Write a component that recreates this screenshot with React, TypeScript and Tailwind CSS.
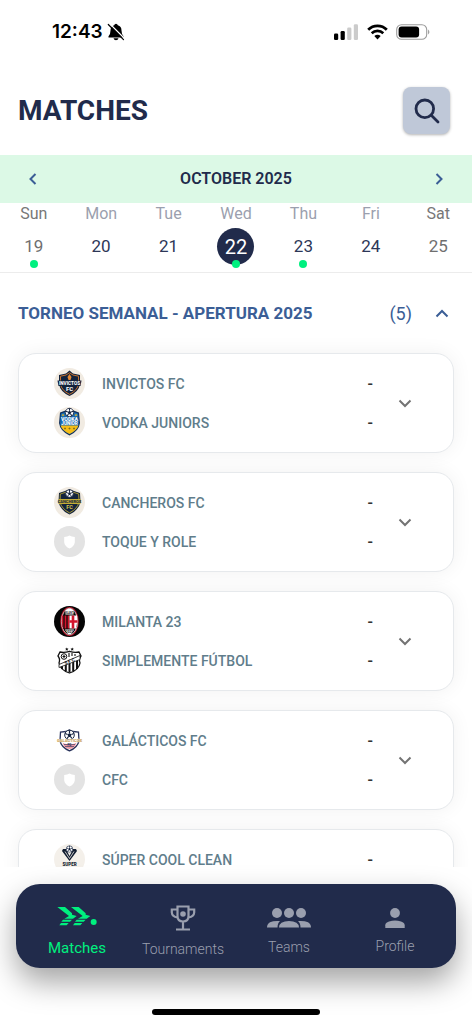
import { useState } from 'react';
import type { ReactNode } from 'react';

type BadgeName = 'invictos' | 'vodka' | 'cancheros' | 'milanta' | 'simplemente' | 'galacticos' | 'super' | 'none';

interface Team {
  name: string;
  badge: BadgeName;
}

interface Day {
  name: string;
  date: number;
  weekend?: boolean;
  hasMatches?: boolean;
}

const days: Day[] = [
  { name: 'Sun', date: 19, weekend: true, hasMatches: true },
  { name: 'Mon', date: 20 },
  { name: 'Tue', date: 21 },
  { name: 'Wed', date: 22, hasMatches: true },
  { name: 'Thu', date: 23, hasMatches: true },
  { name: 'Fri', date: 24 },
  { name: 'Sat', date: 25, weekend: true }
];

const matches: Team[][] = [
  [
    { name: 'INVICTOS FC', badge: 'invictos' },
    { name: 'VODKA JUNIORS', badge: 'vodka' }
  ],
  [
    { name: 'CANCHEROS FC', badge: 'cancheros' },
    { name: 'TOQUE Y ROLE', badge: 'none' }
  ],
  [
    { name: 'MILANTA 23', badge: 'milanta' },
    { name: 'SIMPLEMENTE FÚTBOL', badge: 'simplemente' }
  ],
  [
    { name: 'GALÁCTICOS FC', badge: 'galacticos' },
    { name: 'CFC', badge: 'none' }
  ],
  [{ name: 'SÚPER COOL CLEAN', badge: 'super' }]
];

const Ball = ({ x, y, r }: { x: number; y: number; r: number }) => (
  <g transform={`translate(${x} ${y}) scale(${r})`}>
    <circle r="1" fill="#fff" stroke="#14233f" strokeWidth="0.2" />
    <path d="M0-.4.4-.1.25.4h-.5L-.4-.1Z" fill="#14233f" />
    <path d="M0-.4V-1M.4-.1.9-.3M.25.4.6.8M-.25.4-.6.8M-.4-.1-.9-.3" stroke="#14233f" strokeWidth="0.25" />
  </g>
);

const badges: Record<BadgeName, ReactNode> = {
  invictos: (
    <>
      <circle cx="15.5" cy="15.5" r="15.5" fill="#f1ebe2" />
      <path d="M15.5 2.5 19 5.500 26 7V16Q25 23.500 15.500 28 6 23.500 5 16V7L12 5.500Z" fill="#12223c" />
      <path d="M15.5 4.800 19 7 24.500 8.200V16Q23.500 22.500 15.500 26.300 7.500 22.500 6.500 16V8.200L12 7Z" fill="none" stroke="#c5722f" strokeWidth="1" />
      <path d="M15.5 6 17.500 9 16.500 12H14.500L13.500 9Z" fill="#e58a35" />
      <path d="M3.5 12.500H27.500L26.500 18H4.500Z" fill="#12223c" />
      <text x="15.5" y="17" fontSize="4.7" fontWeight="800" textAnchor="middle" fill="#fff">INVICTOS</text>
      <text x="15.5" y="22.5" fontSize="6" fontWeight="800" textAnchor="middle" fill="#fff">FC</text>
    </>
  ),
  vodka: (
    <>
      <circle cx="15.5" cy="15.5" r="15.5" fill="#f1ebe2" />
      <path d="M15.5 2 25 5.500 26 16Q25 24 15.500 28.500 6 24 5 16L6 5.500Z" fill="#12315c" />
      <path d="M15.5 3.500 24 6.500 25 16Q24 23 15.500 27 7 23 6 16L7 6.500Z" fill="#1469b4" />
      <path d="M6.5 18.500H24.500Q22.500 24 15.500 27 8.500 24 6.500 18.500Z" fill="#f5bd17" />
      <path d="m9 6.500.6 1.200L11 8l-1.400.4L9 9.600l-.6-1.200L7 8l1.400-.3Zm13 0 .6 1.200L24 8l-1.400.4-.6 1.200-.6-1.200L20 8l1.400-.3Z" fill="#f5bd17" />
      <Ball x={15.5} y={5.5} r={4.2} />
      <text x="15.5" y="14.3" fontSize="5.2" fontWeight="800" textAnchor="middle" fill="#fff">VODKA</text>
      <text x="15.5" y="18.4" fontSize="4.6" fontWeight="800" textAnchor="middle" fill="#fff">JUNIOR</text>
      <path d="M11 20.500v2M15.500 20.500v2M20 20.500v2M10 21.500h2M14.500 21.500h2M19 21.500h2" stroke="#7b6a21" strokeWidth="0.8" />
    </>
  ),
  cancheros: (
    <>
      <circle cx="15.5" cy="15.5" r="15.5" fill="#f1ebe2" />
      <path d="M15.5 2 20 4 26 6 26.500 15Q25 23 15.500 27.500 6 23 4.500 15L5 6 11 4Z" fill="#14243c" />
      <path d="M15.5 4 24.700 7 25 15Q23.500 21.800 15.500 25.800 7.500 21.800 6 15L6.300 7Z" fill="none" stroke="#b6a33a" strokeWidth="0.9" />
      <Ball x={15.5} y={6.5} r={3.8} />
      <path d="M4.5 12H26.500V17H4.500Z" fill="#c4ae36" />
      <text x="15.5" y="16.1" fontSize="4" fontWeight="800" textAnchor="middle" fill="#14243c">CANCHEROS</text>
      <text x="15.5" y="21.7" fontSize="5.5" fontWeight="800" textAnchor="middle" fill="#d5c04a">FC</text>
    </>
  ),
  milanta: (
    <>
      <circle cx="15.5" cy="15.5" r="15.5" fill="#050505" />
      <ellipse cx="15.5" cy="15.5" rx="9.3" ry="14.5" fill="#b5152b" />
      <ellipse cx="15.5" cy="15.5" rx="8" ry="13.2" fill="#050505" stroke="#fff" strokeWidth="0.7" />
      <path d="M10.5 5.500Q15.500-.5 20.500 5.500L19.500 8.500H11.500ZM11 23.500H20Q18 28.300 15.500 28.300 13 28.300 11 23.500Z" fill="#fff" />
      <path d="M8 9.500H15.500V22.500H9Q7 16 8 9.500Z" fill="#d3152d" />
      <path d="M10 9v14M13 9v14" stroke="#050505" strokeWidth="1.200" />
      <path d="M15.5 9.500H23Q24 16 22 22.500H15.500Z" fill="#fff" />
      <path d="M19 9.500v13M15.500 15.500h8" stroke="#d3152d" strokeWidth="2.6" />
      <text x="15.5" y="7.8" fontSize="2.6" fontWeight="800" textAnchor="middle" fill="#222">MILANTA</text>
      <text x="15.5" y="26.5" fontSize="3.2" fontWeight="800" textAnchor="middle" fill="#222">2023</text>
    </>
  ),
  simplemente: (
    <>
      <path d="m12.8 2.500.5 1.100 1.200.1-.9.800.3 1.200-1.100-.6-1.100.6.300-1.200-.9-.8 1.200-.1Zm5.400 0 .5 1.100 1.200.1-.9.800.3 1.200-1.100-.6-1.100.6.300-1.200-.9-.8 1.200-.1Z" fill="#111" />
      <path d="M6 7Q10.500 8 15.500 6.300 20.500 8 25 7L27 11Q24.500 14 26 18 25 25 15.500 28 6 25 5 18 6.500 14 4 11Z" fill="#fff" stroke="#111" strokeWidth="1.3" />
      <path d="M8 19v5M11.800 17v9M15.500 15.500v12M19.200 14v12M23 12v12" stroke="#111" strokeWidth="2" />
      <circle cx="10" cy="11.500" r="2.8" fill="#fff" stroke="#111" strokeWidth="1" />
      <path d="M8.5 11.500h3M10 10v3M15 8v4M18 8v3M21 9v2" stroke="#111" strokeWidth="1.100" />
      <path d="M5 19.500 26 10.500V14.500L5 22.500Z" fill="#fff" stroke="#111" strokeWidth="0.8" />
      <text x="15.5" y="18" fontSize="4.5" fontWeight="800" textAnchor="middle" fill="#111" transform="rotate(-21 15.5 16.5)">S F C</text>
    </>
  ),
  galacticos: (
    <>
      <path d="M15.5 5 19 6.500 24.500 7 25 16Q23.500 22.500 15.500 25.800 7.500 22.500 6 16L6.500 7 12 6.500Z" fill="#fff" stroke="#28335b" strokeWidth="1.3" />
      <path d="M8.5 17.500Q12 20 15.500 18.500 19 20 22.500 17.500L21 21.500Q18 24 15.500 24 13 24 10 21.500Z" fill="#ee9aa5" />
      <path d="M10 19.500h11M11 21.500h9" stroke="#28335b" strokeWidth="0.6" />
      <Ball x={15.5} y={10} r={4.8} />
      <text x="15.5" y="16.7" fontSize="4.1" fontWeight="800" textAnchor="middle" fill="#c99e50" stroke="#fff" strokeWidth="0.5" paintOrder="stroke">GALACTICOS</text>
      <text x="15.5" y="20.8" fontSize="3.2" fontWeight="800" textAnchor="middle" fill="#28335b">FC</text>
    </>
  ),
  super: (
    <>
      <circle cx="15.5" cy="15.5" r="15.5" fill="#f4f0ea" />
      <path d="M9 5H12L15.500 12 19 5H22L23 7 15.500 17 8 7Z" fill="#101c30" />
      <path d="M11 7.500 15.500 14.500 20 7.500" fill="none" stroke="#f4f0ea" strokeWidth="0.8" />
      <Ball x={15.5} y={5} r={3.2} />
      <text x="15.5" y="21.5" fontSize="4.5" fontWeight="900" textAnchor="middle" fill="#101c30">SUPER</text>
    </>
  ),
  none: (
    <>
      <circle cx="15.5" cy="15.5" r="15.5" fill="#e3e3e3" />
      <path d="M15.5 9.500Q17.500 10.800 20.800 11V16.500Q20 20.500 15.500 22.500 11 20.500 10.200 16.500V11Q13.500 10.800 15.500 9.500Z" fill="#fff" />
    </>
  )
};

const Badge = ({ name }: { name: BadgeName }) => (
  <svg viewBox="0 0 31 31" className="size-[31px] shrink-0" aria-hidden="true">
    {badges[name]}
  </svg>
);

const Chevron = ({ d, className = '' }: { d: string; className?: string }) => (
  <svg viewBox="0 0 24 24" className={`size-6 ${className}`} fill="none" stroke="currentColor" strokeWidth="2" aria-hidden="true">
    <path d={d} />
  </svg>
);

const StatusBar = () => (
  <div className="flex h-16 items-center justify-between pr-[41px] pl-[52px] text-black">
    <div className="flex items-center gap-1">
      <span className="font-[Inter,sans-serif] text-[19px] font-semibold">12:43</span>
      <svg viewBox="0 0 18 18" className="size-[18px]" aria-hidden="true">
        <path d="M9 .8Q10.500.8 10.800 2.300 14.500 3.300 14.500 7.500 14.500 11.300 16.500 13.300V14.500H1.500V13.300Q3.500 11.300 3.500 7.500 3.500 3.300 7.200 2.300 7.500.8 9 .8ZM6.500 15.300H11.500Q11 17.300 9 17.300 7 17.300 6.500 15.300Z" />
        <path d="M2.5.5 17.500 15.500" stroke="#fff" strokeWidth="1.2" />
        <path d="M1.3 1.500 16.500 16.700" stroke="#000" strokeWidth="1.2" strokeLinecap="round" />
      </svg>
    </div>
    <div className="flex items-center gap-2">
      <svg viewBox="0 0 25 16" className="h-4 w-[25px]" aria-hidden="true">
        <rect x="0" y="9.5" width="4.2" height="6.5" rx="1.3" />
        <rect x="6.6" y="7" width="4.2" height="9" rx="1.3" />
        <rect x="13.2" y="3.5" width="4.2" height="12.5" rx="1.3" fill="#cbcbcb" />
        <rect x="19.8" y="0.3" width="4.2" height="15.7" rx="1.3" fill="#cbcbcb" />
      </svg>
      <svg viewBox="0 0 21 16" className="h-4 w-[21px]" fill="none" stroke="#000" aria-hidden="true">
        <path d="M1.2 5.700A13.200 13.200 0 0 1 19.800 5.700" strokeWidth="2.8" />
        <path d="M4.7 9.200A8.300 8.300 0 0 1 16.300 9.200" strokeWidth="2.6" />
        <path d="M10.5 15.500 7.300 12.100Q10.500 9.500 13.700 12.100Z" fill="#000" stroke="none" />
      </svg>
      <svg viewBox="0 0 35 16" className="h-4 w-[35px]" aria-hidden="true">
        <rect x="0.7" y="0.7" width="30" height="14.6" rx="4.8" fill="none" stroke="#9c9c9c" strokeWidth="1.1" />
        <rect x="2.6" y="2.5" width="20.5" height="11" rx="3" />
        <path d="M32.2 5.500Q34.500 8 32.200 10.500Z" fill="#8d8d8d" />
      </svg>
    </div>
  </div>
);

const DayButton = ({ day, selected, onSelect }: { day: Day; selected: boolean; onSelect: () => void }) => {
  const dateColor = selected ? 'bg-[#212b4b] text-white text-xl' : day.weekend ? 'text-[#6f6f6f] text-[17px]' : 'text-[#2d3757] text-[17px]';

  return (
    <button type="button" onClick={onSelect} className="flex flex-col items-center">
      <span className={`text-base leading-5 ${day.weekend ? 'text-[#777777]' : 'text-[#9b9fae]'}`}>{day.name}</span>
      <span className={`relative mt-1 flex size-[37px] items-center justify-center rounded-full ${dateColor}`}>
        {day.date}
        {day.hasMatches && <span className="absolute -bottom-[3px] size-2 rounded-full bg-[#00f07f]" />}
      </span>
    </button>
  );
};

const MatchCard = ({ teams }: { teams: Team[] }) => (
  <li className="flex items-center rounded-[18px] border border-[#e6e9ec] bg-white py-3.5 pr-9 pl-[35px] shadow-[0_0_20px_rgba(0,0,0,0.06)]">
    <div className="flex flex-1 flex-col gap-2">
      {teams.map((team) => (
        <div key={team.name} className="flex items-center gap-[17px]">
          <Badge name={team.badge} />
          <span className="flex-1 text-sm font-medium text-[#607d8b]">{team.name}</span>
          <span className="px-2 text-base leading-4 font-medium text-[#333333]">-</span>
        </div>
      ))}
    </div>
    {teams.length > 1 && (
      <button type="button" aria-label="Match details" className="ml-3 text-[#737373]">
        <Chevron d="m6.500 9.500 5.500 5.500 5.500-5.500" />
      </button>
    )}
    {teams.length === 1 && <div className="ml-3 w-6" />}
  </li>
);

const MatchesIcon = () => (
  <svg viewBox="0 0 120 60" className="h-5 w-10" fill="currentColor" aria-hidden="true">
    {[0, 41].map((x) => (
      <g key={x} transform={`translate(${x} 0)`}>
        <path d="M1 3H24L45 22V26L59 30 48 38H22L36 30Z" />
        <path d="M18 41H45L39 47H13ZM12 51H35L29 58H7Z" />
      </g>
    ))}
    <circle cx="110" cy="48" r="9" />
  </svg>
);

const TrophyIcon = () => (
  <svg viewBox="0 0 26 26" className="size-[26px]" fill="none" stroke="currentColor" strokeWidth="2.2" aria-hidden="true">
    <path d="M7.5 1.500H18.500V11Q18.500 16.500 13 16.500 7.500 16.500 7.500 11ZM7.500 4.500H1.800V7.500Q2 11.500 7.500 12.500M18.500 4.500H24.200V7.500Q24 11.500 18.500 12.500M13 16.500V24M6 24.500H20" />
    <circle cx="13" cy="9" r="2.8" fill="currentColor" stroke="none" />
  </svg>
);

const TeamsIcon = () => (
  <svg viewBox="0 0 44 22" className="h-[22px] w-11" fill="currentColor" aria-hidden="true">
    <circle cx="10" cy="6" r="5" />
    <circle cx="22" cy="6" r="5" />
    <circle cx="34" cy="6" r="5" />
    <path d="M12 20.500Q12 17.500 14.500 15.800 17.500 14 22 14 26.500 14 29.500 15.800 32 17.500 32 20.500ZM0 20.500Q0 17 3 15.300 6.500 13.500 13 14 10.500 16 10.500 20.500ZM44 20.500Q44 17 41 15.300 37.500 13.500 31 14 33.500 16 33.500 20.500Z" />
  </svg>
);

const ProfileIcon = () => (
  <svg viewBox="0 0 20 20" className="size-5" fill="currentColor" aria-hidden="true">
    <circle cx="10" cy="5" r="4.9" />
    <path d="M.3 20V17.200Q.300 14.800 4 13.500 7 12.500 10 12.500 13 12.500 16 13.500 19.700 14.800 19.700 17.200V20Z" />
  </svg>
);

const App = () => {
  const [selectedDate, setSelectedDate] = useState(22);
  const [open, setOpen] = useState(true);

  return (
    <div className="flex h-screen flex-col bg-white font-[Roboto,sans-serif]">
      <StatusBar />

      <header className="flex items-center justify-between pt-[23px] pr-[22px] pb-[21px] pl-[18px]">
        <h1 className="text-[28px] leading-9 font-bold text-[#212b4b]">MATCHES</h1>
        <button
          type="button"
          aria-label="Search"
          className="flex size-[47px] items-center justify-center rounded-lg bg-[#bfc8d8] text-[#212b4b] shadow-[0_1px_3px_rgba(0,0,0,0.3)]"
        >
          <svg viewBox="0 0 26 26" className="size-[26px]" fill="none" stroke="currentColor" strokeWidth="2.8" strokeLinecap="round" aria-hidden="true">
            <circle cx="10.8" cy="10.8" r="8.8" />
            <path d="m17.500 17.500 6.500 6.500" />
          </svg>
        </button>
      </header>

      <div className="flex h-12 shrink-0 items-center justify-between bg-[#dcf9e6] px-[21px] text-[#3b5e96]">
        <button type="button" aria-label="Previous month">
          <Chevron d="m14.500 7-5 5 5 5" />
        </button>
        <h2 className="text-base font-semibold text-[#212b4b]">OCTOBER 2025</h2>
        <button type="button" aria-label="Next month">
          <Chevron d="m9.500 7 5 5-5 5" />
        </button>
      </div>

      <div className="grid grid-cols-7 border-b border-[#ececec] pt-px pb-[7px]">
        {days.map((day) => (
          <DayButton key={day.date} day={day} selected={day.date === selectedDate} onSelect={() => setSelectedDate(day.date)} />
        ))}
      </div>

      <main className="min-h-0 flex-1 overflow-y-auto px-[18px] [scrollbar-width:none]">
        <button type="button" onClick={() => setOpen(!open)} className="flex h-20 w-full items-center pt-0.5 text-[#3b5e96]">
          <span className="flex-1 text-left text-[17px] font-bold">TORNEO SEMANAL - APERTURA 2025</span>
          <span className="pr-[18px] text-lg">(5)</span>
          <Chevron d="m6.500 14.500 5.500-5.500 5.500 5.500" className={open ? '' : 'rotate-180'} />
        </button>
        {open && (
          <ul className="flex flex-col gap-[19px] pb-5">
            {matches.map((teams) => (
              <MatchCard key={teams[0].name} teams={teams} />
            ))}
          </ul>
        )}
      </main>

      <nav className="mx-4 mt-[17px] grid h-[84px] shrink-0 grid-cols-4 rounded-3xl bg-[#212b4b] px-2 pt-3 text-sm leading-5 font-light text-[#9a9fae] shadow-[0_14px_30px_rgba(0,0,0,0.36)]">
        <a href="#matches" className="flex flex-col items-center justify-center gap-3 text-[15px] font-normal text-[#00f07f]">
          <MatchesIcon />
          Matches
        </a>
        <a href="#tournaments" className="flex flex-col items-center justify-center gap-2">
          <TrophyIcon />
          Tournaments
        </a>
        <a href="#teams" className="flex flex-col items-center justify-center gap-2">
          <TeamsIcon />
          Teams
        </a>
        <a href="#profile" className="flex flex-col items-center justify-center gap-2">
          <ProfileIcon />
          Profile
        </a>
      </nav>

      <div className="mt-[41px] mb-[9px] h-1.5 w-[168px] shrink-0 self-center rounded-full bg-black" />
    </div>
  );
};

export default App;
